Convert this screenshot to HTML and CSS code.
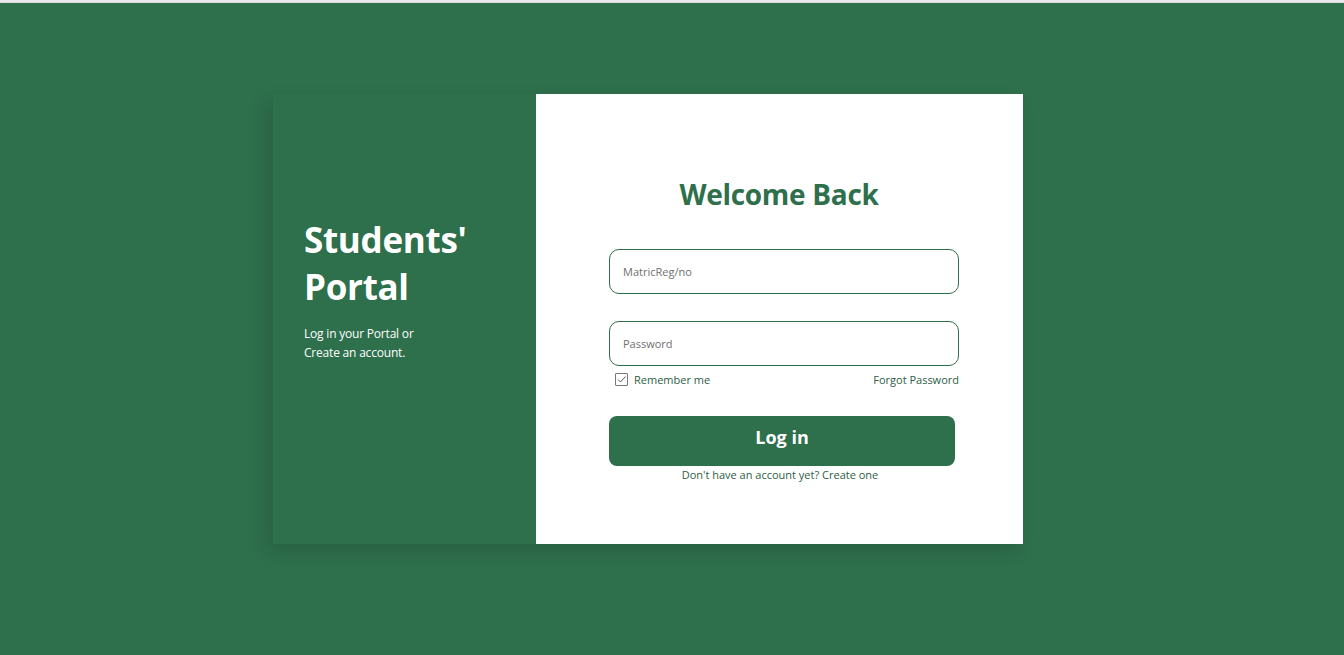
FILE: index.html
```html
<!DOCTYPE html>
<html lang="en">
<head>
<meta charset="utf-8">
<title>Students' Portal</title>
<link rel="stylesheet" href="styles.css">
</head>
<body>
<div class="topbar"></div>
<main class="page">
  <div class="card">
    <section class="intro">
      <h1 class="intro-title">Students'<br>Portal</h1>
      <p class="intro-text">Log in your Portal or<br>Create an account.</p>
    </section>
    <section class="form-panel">
      <h2 class="form-title">Welcome Back</h2>
      <form class="login-form">
        <input class="field" type="text" placeholder="MatricReg/no">
        <input class="field field-pass" type="password" placeholder="Password">
        <div class="options">
          <label class="remember"><span class="check"><svg width="11" height="11" viewBox="0 0 11 11"><path d="M2 5.5 L4.5 8 L9.5 2.5" fill="none" stroke="#555" stroke-width="1"/></svg></span>Remember me</label>
          <a class="forgot" href="#">Forgot Password</a>
        </div>
        <button class="btn" type="button">Log in</button>
        <p class="signup">Don't have an account yet? Create one</p>
      </form>
    </section>
  </div>
</main>
</body>
</html>
```
FILE: styles.css
```css
html, body {
  margin: 0;
  padding: 0;
}
body {
  background: #2e6f4c;
  font-family: "Open Sans", "Noto Sans", sans-serif;
  height: 655px;
  overflow: hidden;
}
.topbar {
  height: 3px;
  background: #e8e9eb;
  border-bottom: 1px solid #d9dadc;
  box-sizing: border-box;
}
.page {
  padding-top: 91px;
  padding-left: 273px;
}
.card {
  display: flex;
  width: 750px;
  height: 450px;
  box-shadow: -6px 8px 18px rgba(0, 0, 0, 0.12);
}
.intro {
  width: 263px;
  background: #2e6f4c;
  box-sizing: border-box;
  padding: 122px 0 0 31px;
  color: #fff;
}
.intro-title {
  margin: 0;
  font-size: 35px;
  line-height: 47px;
  font-weight: 700;
  letter-spacing: -0.3px;
}
.intro-text {
  margin: 14px 0 0;
  font-size: 12px;
  line-height: 19px;
  letter-spacing: -0.2px;
}
.form-panel {
  flex: 1;
  background: #fff;
  box-sizing: border-box;
  padding: 78px 0 0 73px;
}
.form-title {
  margin: 0;
  width: 340px;
  text-align: center;
  font-size: 28px;
  line-height: 44px;
  font-weight: 700;
  color: #2e6f4c;
  letter-spacing: -0.3px;
}
.login-form {
  display: flex;
  flex-direction: column;
  width: 350px;
  margin-top: 33px;
}
.field {
  height: 45px;
  box-sizing: border-box;
  border: 1px solid #2e6f4c;
  border-radius: 10px;
  padding: 0 13px;
  font-family: inherit;
  font-size: 11px;
  color: #333;
  outline: none;
}
.field::placeholder {
  color: #6f6f6f;
}
.field-pass {
  margin-top: 27px;
}
.options {
  display: flex;
  justify-content: space-between;
  align-items: center;
  margin-top: 6px;
  padding-left: 6px;
  font-size: 11px;
  color: #2e5e45;
}
.remember {
  display: flex;
  align-items: center;
}
.check {
  width: 11px;
  height: 11px;
  border: 1px solid #777;
  border-radius: 1px;
  margin-right: 6px;
  display: flex;
}
.forgot {
  color: #2e5e45;
  text-decoration: none;
}
.btn {
  margin-top: 29px;
  width: 346px;
  height: 50px;
  border: none;
  border-radius: 8px;
  background: #2e6f4c;
  color: #fff;
  font-family: inherit;
  font-size: 18px;
  font-weight: 700;
  padding: 0 0 8px;
}
.signup {
  margin: 1px 0 0;
  width: 342px;
  text-align: center;
  font-size: 11px;
  color: #2e5e45;
}
```
